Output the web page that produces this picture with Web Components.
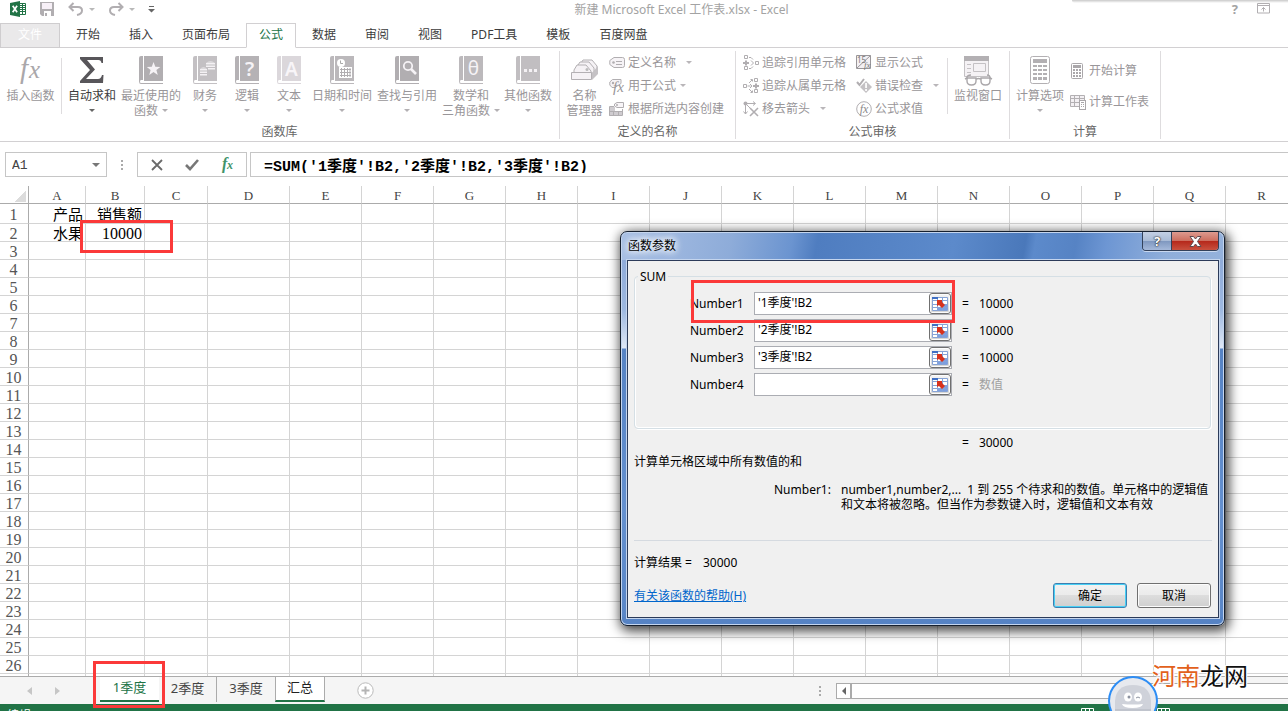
<!DOCTYPE html>
<html lang="zh-CN">
<head>
<meta charset="utf-8">
<title>新建 Microsoft Excel 工作表.xlsx - Excel</title>
<style>
  html, body { margin: 0; height: 100%; overflow: hidden; }
  body { font: 12px/15px "Noto Sans", "Noto Sans CJK SC", sans-serif; color: #444; background: #fff; }
</style>
</head>
<body>
<excel-app></excel-app>

<script>
const define = (name, css, html, setup) => {
  customElements.define(name, class extends HTMLElement {
    constructor() {
      super();
      const root = this.attachShadow({ mode: 'open' });
      root.innerHTML = `<style>*{box-sizing:border-box}button,input{font:inherit;color:inherit;margin:0;padding:0;border:0;background:none;border-radius:0}${css}</style>` +
        (typeof html === 'function' ? html(this) : html);
      if (setup) setup(this, root);
    }
  });
};

/* ---------- icons ---------- */
const G = '#b1aeb1';
const book = (inner, c = G) => [24, 28, `<path fill="${c}" d="M2 0H4V24H2Q1 24 1 25.500Q1 27 2 27H24V28H2Q0 28 0 25.500V2Q0 0 2 0ZM5 0H24V25H5Z"/>${inner}`];
const icons = {
  excel: [16, 16, '<path fill="#fff" stroke="#217346" d="M8.500 2.500h7v11h-7z"/><path stroke="#217346" d="M9 4.500h6M9 6.500h6M9 8.500h6M9 10.500h6M12.500 3v10"/><path fill="#217346" d="M0 2l10-2v16L0 14z"/><path stroke="#fff" stroke-width="1.700" d="M2.700 4.800l4.400 6.500M7.100 4.800l-4.400 6.500"/>'],
  save: [14, 14, `<path fill="${G}" d="M0 0h14v14H2l-2-2z"/><path fill="#f7f0f7" d="M2 1h10v6H2z"/><path fill="#fff" d="M4 9h7v5H4z"/><path fill="${G}" d="M5 11h2v3H5z"/>`],
  undo: [16, 14, `<path fill="none" stroke="${G}" stroke-width="2" d="M5.500 1L1.500 5l4 4M2 5h8q4 0 4 3.500q0 3.500-5 4.500"/>`],
  redo: [16, 14, `<path fill="none" stroke="${G}" stroke-width="2" d="M10.500 1l4 4-4 4M14 5H6Q2 5 2 8.500q0 3.500 5 4.500"/>`],
  more: [7, 7, '<path fill="#666" d="M1 0h5v1H1zM1 3h6L3.500 6.500 0 3z"/>'],
  ribbonup: [13, 11, `<path fill="none" stroke="${G}" d="M.5 .5h12v9.500H.5zM1 2.500h11M6.500 8.500v-4M4.500 6.500l2-2 2 2"/>`],
  fx: [26, 28, `<text x="2" y="22" font-family="Liberation Serif" font-style="italic" font-size="29" fill="#aaa7aa">f</text><text x="11" y="22" font-family="Liberation Serif" font-style="italic" font-size="25" fill="#aaa7aa">x</text>`],
  sum: [24, 28, '<path fill="#58565a" d="M0 1h23v6h-1.500q-.5-3-3-3H7l8 9.500L6 23h12q3 0 4-4h1.500L23 27H0v-2l10-11L0 3z"/>'],
  star: book('<path fill="#f6f3f6" d="M14.500 6l1.800 4.700 5 .2-3.900 3.100 1.400 4.900-4.300-2.800-4.200 2.800 1.300-4.900-3.800-3.100 5-.2z"/>'),
  money: book('<path fill="#f4f1f4" d="M13 7h9v1.500h-9zM13 9.500h9V11h-9zM15 12h7v1.500h-7zM7 13h7v1.500H7zM7 15.500h7V17H7zM7 18h7v1.500H7z"/><path fill="#f4f1f4" d="M13 6.500q4.500-2 9 0zM7 12.500q3.500-2 7 0z"/>', '#c3c0c3'),
  logic: book('<text x="14.500" y="20" text-anchor="middle" font-family="Noto Sans" font-weight="600" font-size="20" fill="#f6f3f6">?</text>', '#b5b2b5'),
  text: book('<text x="14.500" y="20" text-anchor="middle" font-family="Noto Sans" font-weight="600" font-size="19" fill="#f8f5f8">A</text>', '#dbd7db'),
  date: book('<circle cx="11" cy="7" r="4" fill="#fff"/><path fill="none" stroke="#aaa" d="M10.500 4.500v3H13"/><path fill="#fff" d="M9 11h13v11H9z"/><path stroke="#b1aeb1" d="M10 13.500h11M10 16.500h11M10 19.500h11M11.500 12v9M14.500 12v9M17.500 12v9M20 12v9"/>', '#bbb8bb'),
  find: book('<circle cx="13" cy="10" r="4.200" fill="none" stroke="#f6f3f6" stroke-width="1.800"/><path stroke="#f6f3f6" stroke-width="2.600" d="M16 13l5 5"/>'),
  math: book('<text x="14.500" y="19" text-anchor="middle" font-family="Noto Sans" font-size="19" fill="#f6f3f6">θ</text>', '#bcb9bc'),
  dots: book('<path fill="#f4f1f4" d="M8 13h3v3H8zM13 13h3v3h-3zM18 13h3v3h-3z"/>', '#c1bec1'),
  names: [28, 28, `<g fill="#f5f2f5" stroke="#b3b0b3"><path d="M10 7l2-3h9l5 6v5H12z"/><path d="M7 9l2-3h9l5 6v5H9z"/><path d="M3 14l3-5h9l5 6v3H3z"/></g><circle cx="16" cy="13.500" r="1.500" fill="#bbb"/><path fill="#c5c2c5" d="M21 17l6-7v8l-6 6z"/><path fill="#f5f2f5" stroke="#b3b0b3" d="M.5 16.500h20v7H.5z"/>`],
  tag: [16, 14, `<path fill="#f6f3f6" stroke="${G}" d="M5 1.500h8.500q2 0 2 2v6q0 2-2 2H5L.8 8.500v-4z"/><circle cx="4.500" cy="6.500" r="1.300" fill="${G}"/><path stroke="${G}" d="M7 5.500h6M7 8.500h6"/>`],
  tagfx: [16, 14, `<path fill="#f6f3f6" stroke="${G}" d="M3.500 .5h8.500v4L6 8.500H3L.8 6V3z"/><circle cx="4" cy="4" r="1.200" fill="${G}"/><text x="4" y="13" font-family="Liberation Serif" font-style="italic" font-size="15" fill="#989598">fx</text>`],
  create: [16, 14, `<path fill="#cfccd0" d="M0 5h6v4H0zM0 10h4v4H0zM5 10h4v4H5zM10 10h3v4h-3z"/><path fill="none" stroke="${G}" d="M4.500 9v5M9.500 9v5M13.500 7v6.500H.5v-9H5M.5 9.500h13"/><path fill="#f8f5f8" stroke="${G}" d="M8 .5h6.500v5H8L5.500 4V2z"/><circle cx="8" cy="3" r="1" fill="${G}"/>`],
  prec: [16, 16, `<g fill="none" stroke="${G}"><path d="M1.500 .5h3v3h-3zM1.500 11.500h3v3h-3zM12.500 6.500h3v3h-3z"/><path stroke-width="2" d="M0 8h6M3 5.500v5"/><path d="M6 2.500h2l2 2M6 13.500h2l2-2M8 5.500L10.500 8 8 10.500"/></g>`],
  dep: [16, 16, `<g fill="none" stroke="${G}"><path d="M11.500 .5h3v3h-3zM11.500 11.500h3v3h-3zM.5 6.500h3v3h-3z"/><path stroke-width="2" d="M10 8h6M13 5.500v5"/><path d="M4.500 8h3M6 5l3-3M6 11l3 3M7.500 1.500H9.500v2M7.500 14.500h2v-2M7 6l2 2-2 2"/></g>`],
  arrows: [16, 16, `<g fill="none" stroke="${G}"><path d="M2.500 1v12M.5 10.500l2 2.500 2-2.500M1 2.500h11M10 .5l2.500 2-2.500 2M3 3l5 5"/><path stroke-width="1.600" d="M7 7l8 8M15 7l-8 8"/></g><circle cx="2.500" cy="2.500" r="2" fill="${G}"/>`],
  show: [17, 15, `<path fill="#f3f0f3" stroke="#999699" d="M.5 .5h14v13H.5zM14.500 .5L1 13"/><text x="1" y="8" font-family="Noto Sans" font-size="8" fill="#777">15</text><text x="8" y="13" font-family="Liberation Serif" font-style="italic" font-size="9" fill="#777">fx</text>`],
  error: [16, 16, `<path fill="#c4c1c4" d="M10 3l6 6-6 6-6-6z"/><path fill="#fff" d="M9.200 5h1.700v5H9.200zM9.200 11h1.700v2H9.200z"/><path fill="none" stroke="${G}" stroke-width="2" d="M1 4l2.500 3L8 1"/>`],
  eval: [16, 16, `<circle cx="8" cy="8" r="7.300" fill="#fff" stroke="${G}"/><text x="8" y="12" text-anchor="middle" font-family="Liberation Serif" font-style="italic" font-size="12" fill="#8b888b">fx</text>`],
  watch: [30, 30, `<path fill="#f5f2f5" stroke="#c4c1c4" d="M1.500 .5h24v20h-24z"/><path fill="#b3b0b3" d="M1 0h25v5H1z"/><path fill="none" stroke="#c4c1c4" d="M10.500 7.500h12v8h-12zM4 8.500h4M4 12.500h4M4 16.500h4"/><g fill="#fff" stroke="#aaa7aa" stroke-width="1.400"><path d="M4 22h9v3q0 4-4.500 4T4 25zM18 22h9v3q0 4-4.500 4T18 25z"/><path fill="none" d="M13 23q2.500-1 5 0M2 23l2-1q0-3 4-3M29 23l-2-1q0-3-3-3"/></g>`],
  calc: [20, 28, `<rect x=".5" y=".5" width="19" height="27" rx="2" fill="#fff" stroke="#b3b0b3"/><path fill="#b3b0b3" d="M3 3h14v4H3zM3 9h4v2H3zM8 9h4v2H8zM13 9h4v2h-4zM3 13h4v2H3zM8 13h4v2H8zM13 13h4v2h-4zM3 17h4v2H3zM8 17h4v2H8zM13 17h4v2h-4zM3 21h4v3H3zM8 21h4v3H8zM13 21h4v3h-4z"/>`],
  calcs: [16, 16, `<rect x="1.500" y=".5" width="11" height="15" rx="1" fill="#fff" stroke="#aaa7aa"/><path fill="#aaa7aa" d="M3 2h8v3H3zM3 6h2v2H3zM6 6h2v2H6zM9 6h2v2H9zM3 9h2v2H3zM6 9h2v2H6zM9 9h2v2H9zM3 12h2v2H3zM6 12h2v2H6zM9 12h2v2H9z"/>`],
  calcsheet: [16, 16, `<path fill="#f3f0f3" stroke="#b3b0b3" d="M.5 1.500h14v11H.5zM.5 4.500h14M.5 8.500h14M4.500 1.500v11M9.500 1.500v11"/><rect x="9.500" y="6.500" width="6" height="9" fill="#fff" stroke="#aaa7aa"/><path stroke="#aaa7aa" d="M11 8.500h3M11 10.500h1M13 10.500h1M11 12.500h1M13 12.500h1"/>`],
  cross: [12, 12, '<path stroke="#6a6a6a" stroke-width="1.800" d="M1 1l10 10M11 1L1 11"/>'],
  tick: [14, 12, '<path fill="none" stroke="#777" stroke-width="2.600" d="M1 6l4 4 8-9"/>'],
  fxgreen: [14, 16, '<text x="1" y="12" font-family="Liberation Serif" font-style="italic" font-weight="bold" font-size="16" fill="#41936a">f</text><text x="6" y="12" font-family="Liberation Serif" font-style="italic" font-weight="bold" font-size="12" fill="#41936a">x</text>'],
  range: [16, 16, '<path fill="#fff" stroke="#86a3d6" d="M.5 1.500h15v13H.5zM.5 4.500h15M.5 8.500h15M.5 11.500h15M5.500 1.500v13M10.500 1.500v13"/><path fill="#3f6fc4" d="M0 1h6v2H0z"/><path fill="#7d9fe0" d="M11 9h4v2h-4zM11 12h4v2h-4zM6 12h4v2H6z"/><path fill="#d8321c" d="M5 4h5v2l3 3-3 3-3-3-2 1z"/>'],
  close: [13, 11, '<path fill="#fff" stroke="#5c4a50" d="M1 .5h3.500l2 2.500 2-2.500H12L8.500 5.500 12 10.500H8.500L6.500 8l-2 2.500H1l3.500-5z"/>'],
  add: [17, 17, '<circle cx="8.500" cy="8.500" r="7.700" fill="#fff" stroke="#bbb"/><path fill="#b5b5b5" d="M7.500 4.500h2v3h3v2h-3v3h-2v-3h-3v-2h3z"/>'],
  face: [50, 50, '<circle cx="25" cy="25" r="24" fill="#e7e9ee" stroke="#2d8df5" stroke-width="2"/><path fill="#cfd2da" d="M7 34V25Q8 9 25 9t18 16v9z"/><path fill="#c0c4cd" d="M7 33h36v6q-8 9-18 9T7 39z"/><ellipse cx="20" cy="21" rx="4" ry="4.500" fill="#fff"/><ellipse cx="30" cy="21" rx="4" ry="4.500" fill="#fff"/><circle cx="21" cy="21" r="1.500" fill="#8d93a0"/><path fill="none" stroke="#8d93a0" d="M28 22q2-2 4 0"/><path fill="#fff" d="M14 28q11 1 21 0-1 4-10.500 4T14 28z"/>'],
  view: [13, 10, '<path fill="none" stroke="#fff" d="M.5 .5h12v9H.5zM.5 3.500h12M4.500 .5v9M8.500 .5v9"/>'],
};
customElements.define('x-icon', class extends HTMLElement {
  constructor() {
    super();
    const root = this.attachShadow({ mode: 'open' });
    const [w, h, body] = icons[this.getAttribute('name')];
    root.innerHTML = `<style>:host{display:inline-flex;flex:none}svg{display:block;overflow:visible}</style><svg width="${w}" height="${h}" viewBox="0 0 ${w} ${h}" aria-hidden="true">${body}</svg>`;
  }
});
define('x-caret', ':host{display:inline-block;flex:none;width:0;height:0;border:3px solid transparent;border-top-color:currentColor;border-bottom:0}', '');

/* ---------- title bar ---------- */
define('title-bar', `
  :host{display:flex;height:23px;align-items:flex-start;position:relative;color:#a3a3a3}
  nav{display:flex;padding:0 0 0 10px;align-items:center;height:18px}
  nav button{display:flex;align-items:center;margin-right:14px}
  nav .u{gap:5px;margin-right:13px;color:#b9b9b9}
  h1{font-size:12px;font-weight:400;line-height:19px;margin:0;position:absolute;left:75px;right:0;text-align:center;pointer-events:none}
  .r{margin-left:auto;display:flex;gap:19px;padding:0 18px 0 0;height:19px;align-items:center}
  .q{font-weight:700;font-size:13px}
  .shade{position:absolute;right:0;top:0;width:216px;height:3px;background:linear-gradient(#c9c9c9,#fff);border-radius:0 0 0 4px}
`, `<nav><button aria-label="Excel"><x-icon name="excel"></x-icon></button>
  <button aria-label="保存"><x-icon name="save"></x-icon></button>
  <button class="u" aria-label="撤消"><x-icon name="undo"></x-icon><x-caret></x-caret></button>
  <button class="u" aria-label="恢复"><x-icon name="redo"></x-icon><x-caret></x-caret></button>
  <button aria-label="自定义"><x-icon name="more"></x-icon></button></nav>
  <h1>新建 Microsoft Excel 工作表.xlsx - Excel</h1>
  <div class="shade"></div>
  <div class="r"><button class="q">?</button><button aria-label="功能区显示选项"><x-icon name="ribbonup"></x-icon></button></div>`);

/* ---------- ribbon ---------- */
define('ribbon-tabs', `
  :host{display:flex;height:25px;gap:3px;border-bottom:1px solid #d2d0d2}
  button{height:25px;padding:0 12px 2px;border:1px solid transparent;white-space:nowrap;line-height:22px;color:#3c3c3c}
  .file{width:60px;background:#eae9ea;border-color:#cfcdcf;color:#fff}
  .on{background:#fff;border-color:#d2d0d2;border-bottom-color:#fff;color:#217346}
`, `<button class="file">文件</button>` + ['开始', '插入', '页面布局', '公式', '数据', '审阅', '视图', 'PDF工具', '模板', '百度网盘']
  .map(t => `<button class="${t === '公式' ? 'on' : ''}">${t}</button>`).join(''));

define('big-button', `
  :host{display:block;color:#999699}
  :host([enabled]){color:#3c3c3c}
  button{width:100%;height:100%;padding-top:5px;display:flex;flex-direction:column;align-items:center;white-space:nowrap;line-height:15px}
  .i{height:28px;display:flex;margin-bottom:4px}
  .two{display:flex;align-items:center;gap:4px}
  x-caret{color:#b3b0b3}
  .alone{margin-top:6px}
  :host([enabled]) x-caret{color:#666}
`, h => {
  const l2 = h.getAttribute('second'), c = h.hasAttribute('menu');
  return `<button><span class="i"><x-icon name="${h.getAttribute('icon')}"></x-icon></span><span><slot></slot></span>` +
    (l2 ? `<span class="two">${l2}${c ? '<x-caret></x-caret>' : ''}</span>` : c ? '<x-caret class="alone"></x-caret>' : '') + '</button>';
});
define('small-button', `
  :host{display:block;color:#999699}
  button{display:flex;align-items:center;height:23px;white-space:nowrap}
  .i{width:19px;display:flex}
  x-caret{margin-left:4px;color:#b9b6b9}
  :host([menu=wide]) x-caret{margin-left:10px}
`, h => `<button><span class="i"><x-icon name="${h.getAttribute('icon')}"></x-icon></span><slot></slot>${h.hasAttribute('menu') ? '<x-caret></x-caret>' : ''}</button>`);
define('ribbon-group', `
  :host{display:flex;flex-direction:column;height:88px;border-right:1px solid #dedcde}
  .b{flex:1;display:flex}
  .l{height:15px;text-align:center;color:#666}
`, h => `<div class="b"><slot></slot></div><div class="l">${h.getAttribute('label') || ''}</div>`);
define('ribbon-panel', `
  :host{display:flex;height:94px;padding:3px 0;border-bottom:1px solid #d2d0d2}
  ribbon-group{flex:none}
  .g1{width:560px}.g2{width:176px}.g3{width:274px}.g4{width:151px}
  hr{margin:7px 0 10px;border:0;width:1px;background:#dedcde}
  .w34{width:34px}.w49{width:49px}.w50{width:50px}.w54{width:54px}.w56{width:56px}.w58{width:58px}.w60{width:60px}.w61{width:61px}.w74{width:74px}
  .c1{padding-left:7px;width:120px}.c2{width:91px}.c3{display:flex;flex-direction:column;gap:8px;padding-top:8px}
`, `
<ribbon-group class="g1" label="函数库">
  <big-button class="w61" icon="fx">插入函数</big-button><hr>
  <big-button class="w60" icon="sum" enabled menu>自动求和</big-button>
  <big-button class="w58" icon="star" second="函数" menu>最近使用的</big-button>
  <big-button class="w50" icon="money" menu>财务</big-button>
  <big-button class="w34" icon="logic" menu>逻辑</big-button>
  <big-button class="w50" icon="text" menu>文本</big-button>
  <big-button class="w56" icon="date" menu>日期和时间</big-button>
  <big-button class="w74" icon="find" menu>查找与引用</big-button>
  <big-button class="w54" icon="math" second="三角函数" menu>数学和</big-button>
  <big-button class="w60" icon="dots" menu>其他函数</big-button>
</ribbon-group>
<ribbon-group class="g2" label="定义的名称">
  <big-button class="w49" icon="names" second="管理器">名称</big-button>
  <div><small-button icon="tag" menu="wide">定义名称</small-button>
  <small-button icon="tagfx" menu>用于公式</small-button>
  <small-button icon="create">根据所选内容创建</small-button></div>
</ribbon-group>
<ribbon-group class="g3" label="公式审核">
  <div class="c1"><small-button icon="prec">追踪引用单元格</small-button>
  <small-button icon="dep">追踪从属单元格</small-button>
  <small-button icon="arrows" menu="wide">移去箭头</small-button></div>
  <div class="c2"><small-button icon="show">显示公式</small-button>
  <small-button icon="error" menu="wide">错误检查</small-button>
  <small-button icon="eval">公式求值</small-button></div><hr>
  <big-button class="w60" icon="watch">监视窗口</big-button>
</ribbon-group>
<ribbon-group class="g4" label="计算">
  <big-button class="w60" icon="calc" menu>计算选项</big-button>
  <div class="c3"><small-button icon="calcs">开始计算</small-button>
  <small-button icon="calcsheet">计算工作表</small-button></div>
</ribbon-group>`);

/* ---------- formula bar ---------- */
define('formula-bar', `
  :host{display:flex;height:44px;padding:10px 0 9px 5px}
  .box{border:1px solid #c6c6c6;display:flex;align-items:center;background:#fff}
  .name{width:102px;padding:0 6px;color:#777}
  .name input{flex:1;min-width:0;padding-top:2px;font:13px "Liberation Mono",monospace;color:#444}
  .name x-caret{border-width:4px 4px 0}
  .grip{width:30px;display:flex;align-items:center;justify-content:center}
  .grip i{width:2px;height:10px;background:repeating-linear-gradient(#aaa 0 2px,transparent 2px 4px)}
  .acts{width:110px;padding-left:2px;justify-content:space-around;margin-right:3px}
  .acts button{display:flex}
  .f{flex:1;min-width:0;padding-left:13px;border-right:0}
  .f input{width:100%;font:bold 15px "Liberation Mono","Noto Sans CJK SC",monospace;color:#000}
`, `<div class="box name"><input aria-label="名称框" value="A1"><x-caret></x-caret></div>
<div class="grip"><i></i></div>
<div class="box acts"><button aria-label="取消"><x-icon name="cross"></x-icon></button><button aria-label="输入"><x-icon name="tick"></x-icon></button><button aria-label="插入函数"><x-icon name="fxgreen"></x-icon></button></div>
<div class="box f"><input aria-label="编辑栏" value="=SUM('1季度'!B2,'2季度'!B2,'3季度'!B2)"></div>`);

/* ---------- grid ---------- */
const cols = 'ABCDEFGHIJKLMNOPQR'.split('');
const widths = { A: 57, B: 59, C: 63, D: 82 };
const cells = { A1: '产品', B1: '销售额', A2: '水果', B2: '10000' };
define('sheet-grid', `
  :host{display:block;flex:1;min-height:0;overflow:hidden}
  table{border-collapse:separate;border-spacing:0;table-layout:fixed;width:0;color:#000}
  th,td{padding:0;border:0 solid #d4d4d4;border-right-width:1px;border-bottom-width:1px;white-space:nowrap;font-weight:400}
  tr{height:18px}
  tr.first{height:20px}
  thead th{font:13px/15px "Liberation Serif",serif;padding-top:2px;border-bottom-color:#ababab;color:#444;height:18px}
  tbody th{font:16px/15px "Liberation Serif",serif;padding:2px 1px 0 0;color:#555;border-right-color:#ababab}
  td{text-align:right;padding-right:2px;font:15px/17px "Noto Sans CJK SC",sans-serif}
  td.n{font:16px/15px "Liberation Serif",serif;padding-top:2px}
  .corner{background:linear-gradient(135deg,transparent 50%,#dcdcdc 50%) 15px 5px/11px 11px no-repeat;border-right-color:#ababab}
`, `<table><colgroup><col style="width:29px">${cols.map(c => `<col style="width:${widths[c] || 72}px">`).join('')}</colgroup>
<thead><tr><th class="corner"></th>${cols.map(c => `<th>${c}</th>`).join('')}</tr></thead><tbody>${
  Array.from({ length: 27 }, (_, i) => `<tr class="${i ? '' : 'first'}"><th>${i < 26 ? i + 1 : ''}</th>${cols.map(c => {
    const v = cells[c + (i + 1)] || '';
    return `<td class="${/^\d/.test(v) ? 'n' : ''}">${v}</td>`;
  }).join('')}</tr>`).join('')}</tbody></table>`);

/* ---------- sheet tabs, status ---------- */
define('sheet-tabs', `
  :host{display:flex;flex:none;height:28px;background:#f5f5f5;border-top:1px solid #ababab;font-size:13px}
  .nav{width:100px;display:flex;padding-left:27px;gap:23px;align-items:center}
  .nav button{width:0;height:0;border:4px solid transparent;border-right:5px solid #c6c6c6;border-left:0}
  .nav button+button{border-right:0;border-left:5px solid #c6c6c6}
  .t{height:25px;width:58px;text-align:center;color:#444;padding-bottom:2px}
  .on{background:#fff;color:#217346;border-bottom:2px solid #217346;width:59px}
  .sel{background:#fff;color:#222;border:1px solid #ababab;border-top:0;border-bottom:2px solid #217346;width:50px}
  .sep{border-right:1px solid #ababab}
  .add{margin-left:32px;display:flex;align-items:center}
  .grip{width:2px;height:10px;margin:9px 15px 0 auto;background:repeating-linear-gradient(#aaa 0 2px,transparent 2px 4px)}
  .bar{width:calc(35% + 1px);height:16px;margin-top:6px;border:1px solid #ababab;border-right:0;background:#fff}
  .bar button{width:15px;height:14px;display:flex;align-items:center;justify-content:center;border-right:2px solid #ababab}
  .bar i{border:4px solid transparent;border-right-color:#666;border-left:0}
`, `<div class="nav"><button aria-label="上一张"></button><button aria-label="下一张"></button></div>
<button class="t on">1季度</button><button class="t sep">2季度</button><button class="t">3季度</button><button class="t sel">汇总</button>
<button class="add" aria-label="新工作表"><x-icon name="add"></x-icon></button>
<div class="grip"></div><div class="bar"><button aria-label="向左滚动"><i></i></button></div>`);
define('status-bar', `
  :host{display:flex;flex:none;height:7px;overflow:hidden;background:#217346;color:#fff;padding:4px 118px 0 7px;align-items:flex-start}
  .v{margin:0 0 0 auto;display:flex;gap:63px}
`, `<span>编辑</span><div class="v"><x-icon name="view"></x-icon><x-icon name="view"></x-icon></div>`);

/* ---------- dialog ---------- */
define('argument-row', `
  :host{display:flex;height:23px;align-items:center;color:#000}
  label{width:119px;padding-left:55px}
  .f{width:198px;height:23px;border:1px solid #abadb3;background:#fff;display:flex}
  input{flex:1;min-width:0;padding:0 0 2px 3px;outline:0}
  button{width:22px;height:21px;border:1px solid #707070;border-radius:3px;background:linear-gradient(#f4f4f4,#d4d4d4);display:flex;align-items:center;justify-content:center;box-shadow:inset 0 0 0 1px #fcfcfc}
  .e{width:27px;padding-left:10px}
  :host([empty]) .v{color:#a0a0a0}
`, h => {
  const n = h.getAttribute('name');
  return `<label for="i">${n}</label><div class="f"><input id="i" value="${h.getAttribute('value') || ''}"><button aria-label="选择区域"><x-icon name="range"></x-icon></button></div><span class="e">=</span><span class="v"><slot></slot></span>`;
});
define('function-dialog', `
  :host{display:flex;flex-direction:column;width:605px;height:395px;padding:0 5px 7px 6px;border:1px solid #16202f;border-radius:7px;color:#000;
    background:linear-gradient(#5683c4,#5683c4) 0 100%/100% 8px no-repeat,linear-gradient(#8fabd9 0,#9db8e0 50px,#dfe8f6 88px,#5683c4 89px,#6490cf 250px,#5683c4) 0 28px no-repeat,
    linear-gradient(100deg,#a9c0e4 0,#8eacd9 110px,#6b94d0 170px,#4f7dc0 195px,#5c8acb 330px,#4a78ba 400px,#5c8acb 410px,#5683c4 450px,#6d96d3 480px,#8faeda 540px,#9ab5dd);
    box-shadow:inset 0 0 0 1px #c4d5ee,2px 3px 12px 2px rgba(0,0,0,.75)}
  header{height:28px;flex:none;display:flex;position:relative}
  h2{font-size:12px;font-weight:400;margin:0 0 0 1px;line-height:27px;text-shadow:0 0 6px #fff,0 0 8px #fff,0 0 10px #fff}
  .win{margin-left:auto;display:flex;height:19px;border:1px solid #33415a;border-top:0;border-radius:0 0 4px 4px;overflow:hidden;box-shadow:0 1px 0 #c9d8ef}
  .win button{display:flex;align-items:center;justify-content:center;width:28px;background:linear-gradient(#c3d0e4,#a9bbd6 48%,#7e97bf 50%,#a5b9da);color:#fff;font-weight:700;font-size:13px;text-shadow:0 0 1px #333,0 0 1px #333,0 0 2px #333}
  .win .x{width:47px;border-left:1px solid #33415a;background:linear-gradient(#dd9a8f,#cd6f60 48%,#b5271a 50%,#c8513f)}
  main{flex:1;background:#f0f0f0;border:1px solid #2c3b59;box-shadow:0 0 0 1px #c4d5ee;padding:8px 6px 0;display:flex;flex-direction:column}
  fieldset{margin:0;border:1px solid #d5dfe5;border-radius:4px;padding:8px 0 0;height:160px;width:577px;min-width:0;box-shadow:inset 1px -1px #fff,1px 1px #fff}
  legend{padding:0 2px;margin-left:3px;line-height:15px}
  .rows{display:flex;flex-direction:column;gap:4px}
  .sum{padding-left:328px;display:flex;gap:10px;margin-top:6px}
  p{margin:0}
  .d{margin-top:4px}
  .arg{display:flex;margin-top:13px;padding-left:140px}
  .arg b{font-weight:400;width:67px;flex:none}
  .arg span{white-space:pre}
  hr{margin:28px 0 14px;border:0;width:100%;height:1px;background:#d5dae0}
  .res{display:flex;gap:11px}
  footer{display:flex;gap:10px;align-items:center;margin:13px 1px 0 0}
  a{color:#0066cc;margin-right:auto}
  footer button{width:74px;height:25px;border:1px solid #707070;border-radius:3px;background:linear-gradient(#f2f2f2,#ebebeb 48%,#dddddd 50%,#cfcfcf);box-shadow:inset 0 0 0 1px #fcfcfc}
  footer .ok{border-color:#3c7fb1;box-shadow:inset 0 0 0 1px #48d0f5}
`, `<header><h2>函数参数</h2><div class="win"><button>?</button><button class="x" aria-label="关闭"><x-icon name="close"></x-icon></button></div></header>
<main><fieldset><legend>SUM</legend><div class="rows">
<argument-row name="Number1" value="'1季度'!B2">10000</argument-row>
<argument-row name="Number2" value="'2季度'!B2">10000</argument-row>
<argument-row name="Number3" value="'3季度'!B2">10000</argument-row>
<argument-row name="Number4" empty>数值</argument-row></div></fieldset>
<div class="sum"><span>=</span><span>30000</span></div>
<p class="d">计算单元格区域中所有数值的和</p>
<div class="arg"><b>Number1:</b><span>number1,number2,...  1 到 255 个待求和的数值。单元格中的逻辑值
和文本将被忽略。但当作为参数键入时，逻辑值和文本有效</span></div>
<hr><div class="res"><span>计算结果 =</span><span>30000</span></div>
<footer><a href="#help">有关该函数的帮助(H)</a><button class="ok">确定</button><button>取消</button></footer></main>`);

/* ---------- overlays and app ---------- */
define('red-mark', ':host{display:block;position:absolute;border:3px solid #fb3939;box-sizing:border-box;pointer-events:none}', '');
define('site-mark', `
  :host{display:block;white-space:nowrap;font:24px/30px "Noto Sans CJK SC",sans-serif;color:#111;text-shadow:1px 0 #fff,-1px 0 #fff,0 1px #fff,0 -1px #fff,1px 1px #fff,-1px -1px #fff}
  b{font-weight:400;color:#e2611c}`, '<b>河南</b>龙网');
define('excel-app', `
  :host{display:flex;flex-direction:column;height:100vh;position:relative;overflow:hidden;background:#fff}
  title-bar,ribbon-tabs,ribbon-panel,formula-bar{flex:none;box-sizing:border-box}
  ribbon-panel,formula-bar,status-bar,sheet-tabs,function-dialog{box-sizing:border-box}
  function-dialog{position:absolute;left:620px;top:231px}
  .m1{left:80px;top:220px;width:93px;height:33px}
  .m2{left:691px;top:280px;width:264px;height:43px}
  .m3{left:93px;top:661px;width:72px;height:47px}
  .face{position:absolute;left:1108px;top:676px}
  site-mark{position:absolute;left:1152px;top:660px}
`, `<title-bar></title-bar><ribbon-tabs></ribbon-tabs><ribbon-panel></ribbon-panel><formula-bar></formula-bar>
<sheet-grid></sheet-grid><sheet-tabs></sheet-tabs><status-bar></status-bar>
<function-dialog role="dialog" aria-label="函数参数"></function-dialog>
<red-mark class="m1"></red-mark><red-mark class="m2"></red-mark><red-mark class="m3"></red-mark>
<x-icon class="face" name="face"></x-icon><site-mark></site-mark>`);
</script>
</body>
</html>
